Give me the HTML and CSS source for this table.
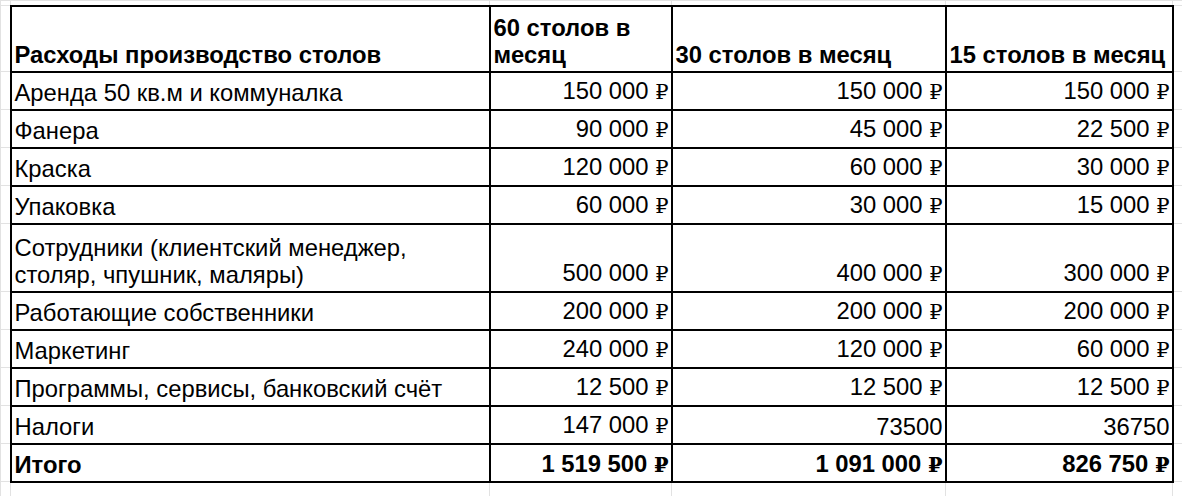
FILE: index.html
```html
<!DOCTYPE html>
<html lang="ru">
<head>
<meta charset="utf-8">
<title>Расходы производство столов</title>
<link rel="stylesheet" href="styles.css">
</head>
<body>
<table class="sheet">
  <colgroup>
    <col class="c-pad-l">
    <col class="c-name">
    <col class="c-60">
    <col class="c-30">
    <col class="c-15">
    <col class="c-pad-r">
  </colgroup>
  <tr class="r-top">
    <td class="g"></td><td class="g"></td><td class="g"></td><td class="g"></td><td class="g"></td><td class="g"></td>
  </tr>
  <tr class="r-head">
    <td class="g"></td>
    <th class="name">Расходы производство столов</th>
    <th>60 столов в месяц</th>
    <th>30 столов в месяц</th>
    <th>15 столов в месяц</th>
    <td class="g"></td>
  </tr>
  <tr class="r">
    <td class="g"></td>
    <td class="name">Аренда 50 кв.м и коммуналка</td>
    <td class="num">150 000 <span class="rub">₽</span></td>
    <td class="num">150 000 <span class="rub">₽</span></td>
    <td class="num">150 000 <span class="rub">₽</span></td>
    <td class="g"></td>
  </tr>
  <tr class="r">
    <td class="g"></td>
    <td class="name">Фанера</td>
    <td class="num">90 000 <span class="rub">₽</span></td>
    <td class="num">45 000 <span class="rub">₽</span></td>
    <td class="num">22 500 <span class="rub">₽</span></td>
    <td class="g"></td>
  </tr>
  <tr class="r">
    <td class="g"></td>
    <td class="name">Краска</td>
    <td class="num">120 000 <span class="rub">₽</span></td>
    <td class="num">60 000 <span class="rub">₽</span></td>
    <td class="num">30 000 <span class="rub">₽</span></td>
    <td class="g"></td>
  </tr>
  <tr class="r">
    <td class="g"></td>
    <td class="name">Упаковка</td>
    <td class="num">60 000 <span class="rub">₽</span></td>
    <td class="num">30 000 <span class="rub">₽</span></td>
    <td class="num">15 000 <span class="rub">₽</span></td>
    <td class="g"></td>
  </tr>
  <tr class="r-tall">
    <td class="g"></td>
    <td class="name">Сотрудники (клиентский менеджер,<br>столяр, чпушник, маляры)</td>
    <td class="num">500 000 <span class="rub">₽</span></td>
    <td class="num">400 000 <span class="rub">₽</span></td>
    <td class="num">300 000 <span class="rub">₽</span></td>
    <td class="g"></td>
  </tr>
  <tr class="r">
    <td class="g"></td>
    <td class="name">Работающие собственники</td>
    <td class="num">200 000 <span class="rub">₽</span></td>
    <td class="num">200 000 <span class="rub">₽</span></td>
    <td class="num">200 000 <span class="rub">₽</span></td>
    <td class="g"></td>
  </tr>
  <tr class="r">
    <td class="g"></td>
    <td class="name">Маркетинг</td>
    <td class="num">240 000 <span class="rub">₽</span></td>
    <td class="num">120 000 <span class="rub">₽</span></td>
    <td class="num">60 000 <span class="rub">₽</span></td>
    <td class="g"></td>
  </tr>
  <tr class="r">
    <td class="g"></td>
    <td class="name">Программы, сервисы, банковский счёт</td>
    <td class="num">12 500 <span class="rub">₽</span></td>
    <td class="num">12 500 <span class="rub">₽</span></td>
    <td class="num">12 500 <span class="rub">₽</span></td>
    <td class="g"></td>
  </tr>
  <tr class="r">
    <td class="g"></td>
    <td class="name">Налоги</td>
    <td class="num">147 000 <span class="rub">₽</span></td>
    <td class="num">73500</td>
    <td class="num">36750</td>
    <td class="g"></td>
  </tr>
  <tr class="r total">
    <td class="g"></td>
    <td class="name">Итого</td>
    <td class="num">1 519 500 <span class="rub">₽</span></td>
    <td class="num">1 091 000 <span class="rub">₽</span></td>
    <td class="num">826 750 <span class="rub">₽</span></td>
    <td class="g"></td>
  </tr>
  <tr class="r-bottom">
    <td class="g"></td><td class="g"></td><td class="g"></td><td class="g"></td><td class="g"></td><td class="g"></td>
  </tr>
</table>
</body>
</html>
```

FILE: styles.css
```css
html, body {
  margin: 0;
  padding: 0;
  background: #ffffff;
  overflow: hidden;
}

.sheet {
  border-collapse: collapse;
  table-layout: fixed;
  width: 1192px;
  font-family: "Liberation Sans", Arial, sans-serif;
  font-size: 23.8px;
  color: #000000;
}

.c-pad-l { width: 10px; }
.c-name { width: 479px; }
.c-60 { width: 182px; }
.c-30 { width: 274px; }
.c-15 { width: 227px; }
.c-pad-r { width: 20px; }

.sheet td,
.sheet th {
  border: 2px solid #000000;
  padding: 0 3px 3px 3px;
  vertical-align: bottom;
  line-height: 27px;
  overflow: hidden;
}

.sheet td.g {
  border: 1px solid #e2e2e2;
  padding: 0;
}

.sheet th {
  font-weight: bold;
  text-align: left;
}

.r-top { height: 5px; }
.r-head { height: 66px; }
.r { height: 38px; }
.r-tall { height: 68px; }
.r-bottom { height: 15px; }

.num {
  text-align: right;
  white-space: nowrap;
}

.sheet .num { padding-right: 2px; }

.name { white-space: nowrap; }

.total td { font-weight: bold; }

.rub {
  font-family: "DejaVu Serif", "Liberation Serif", serif;
  font-weight: normal;
  font-size: 0.88em;
}

.total .rub { font-weight: bold; }
```
